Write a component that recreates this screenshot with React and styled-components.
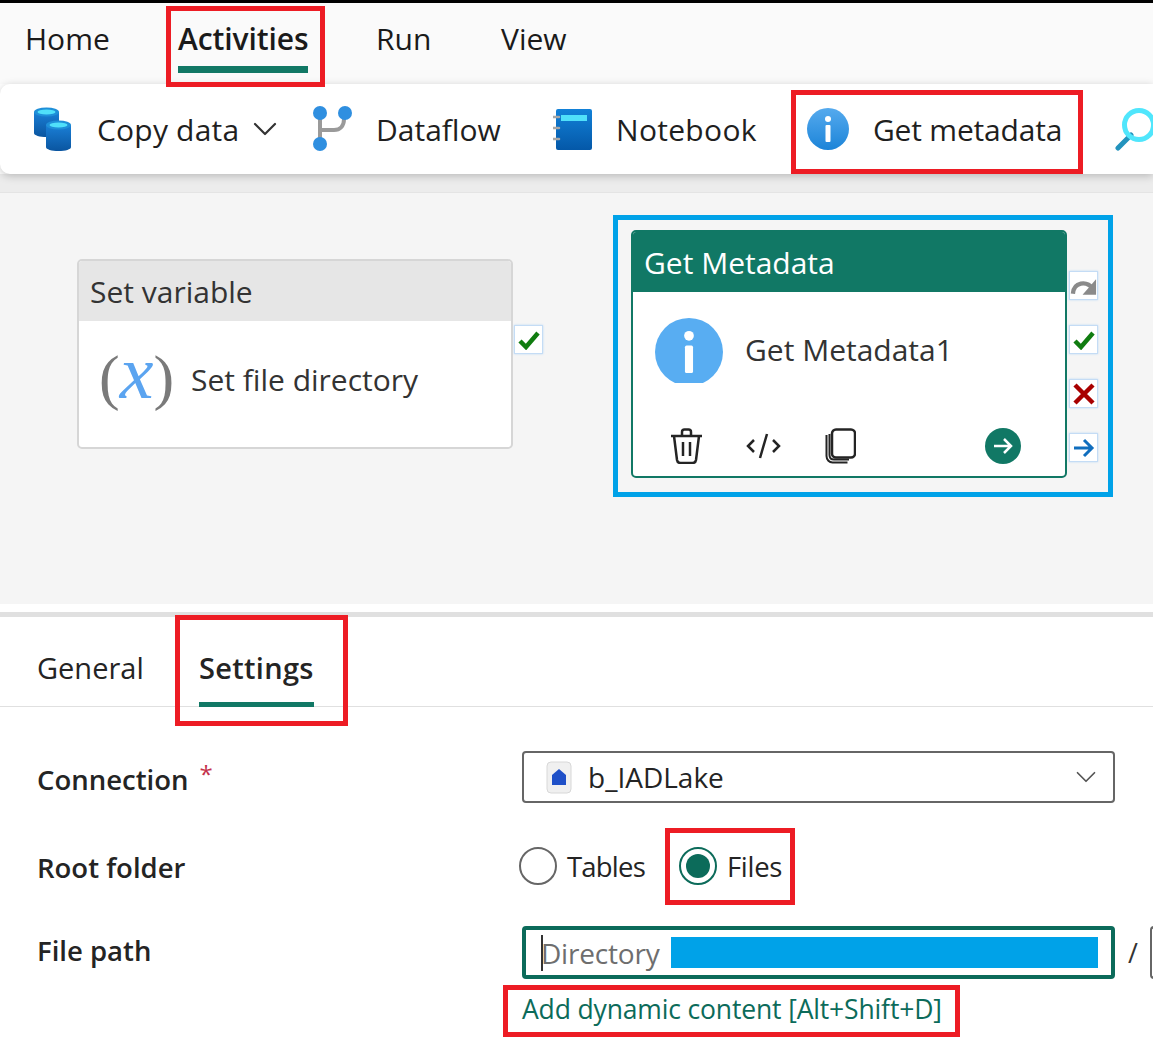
import styled, { createGlobalStyle } from "styled-components";
import { ChevronDown } from "lucide-react";

const Global = createGlobalStyle`
  html, body { margin: 0; padding: 0; background: #fff; }
  body { font-family: "Open Sans", "Noto Sans", sans-serif; color: #242424; }
`;

const Page = styled.div`
  width: 1153px;
  height: 1039px;
  overflow: hidden;
  border-top: 3px solid #000;
  box-sizing: border-box;
  background: #fff;
`;

// red annotation frames sit on top of the ui
const Marker = styled.div`
  position: absolute;
  top: ${(p) => p.$t}px;
  right: ${(p) => p.$r}px;
  bottom: ${(p) => p.$b}px;
  left: ${(p) => p.$l}px;
  border: 5px solid #ed1c24;
  pointer-events: none;
  z-index: 5;
`;

const MenuBar = styled.div`
  height: 81px;
  box-sizing: border-box;
  background: #fafafa;
  display: flex;
  align-items: center;
  padding: 0 0 10px 25px;
  font-size: 30px;
`;
const MenuItem = styled.div`
  position: relative;
  margin-right: ${(p) => p.$after}px;
  width: ${(p) => p.$w}px;
  white-space: nowrap;
  font-weight: ${(p) => (p.$active ? 600 : 400)};
  letter-spacing: ${(p) => (p.$active ? -0.1 : 0)}px;
  color: #1a1a1a;
`;
const MenuUnderline = styled.div`
  position: absolute;
  left: 0;
  right: 0;
  bottom: -14px;
  height: 7px;
  background: #117865;
`;

const Toolbar = styled.div`
  height: 90px;
  background: #fff;
  border-radius: 10px 0 0 10px;
  display: flex;
  align-items: center;
  padding-left: 32px;
  font-size: 30px;
  box-shadow: 0 2px 8px rgba(0, 0, 0, 0.22);
  position: relative;
  z-index: 2;
`;
const ToolItem = styled.div`
  position: relative;
  display: flex;
  align-items: center;
  margin-right: ${(p) => p.$after}px;
  color: #1f1f1f;
  white-space: nowrap;
  flex: none;
`;
const ToolLabel = styled.span`
  margin-left: ${(p) => p.$gap}px;
  width: ${(p) => p.$w}px;
  letter-spacing: ${(p) => p.$ls || 0}px;
`;
const ToolIcon = styled.svg`
  display: block;
  flex: none;
`;
const CopyChevron = styled(ChevronDown)`
  margin: 0 -9px 0 6px;
  flex: none;
`;

const ToolGap = styled.div`
  height: 18px;
  background: #ececec;
`;

const Canvas = styled.div`
  position: relative;
  height: 412px;
  background: #f5f5f5;
  border-top: 1px solid #e4e4e4;
  box-sizing: border-box;
`;
const Selection = styled.div`
  position: absolute;
  left: 613px;
  top: 22px;
  width: 500px;
  height: 282px;
  box-sizing: border-box;
  border: 5px solid #00a2e8;
`;
const Node = styled.div`
  position: absolute;
  left: ${(p) => p.$x}px;
  top: ${(p) => p.$y}px;
  width: 436px;
  height: ${(p) => p.$h}px;
  box-sizing: border-box;
  background: #fff;
  border: 2px solid ${(p) => (p.$selected ? "#117865" : "#d6d6d6")};
  border-radius: 5px;
  overflow: hidden;
  display: flex;
  flex-direction: column;
`;
const NodeHeader = styled.div`
  height: 60px;
  flex: none;
  box-sizing: border-box;
  padding-left: 11px;
  display: flex;
  align-items: center;
  font-size: 30px;
  background: ${(p) => (p.$selected ? "#117865" : "#e6e6e6")};
  color: ${(p) => (p.$selected ? "#fff" : "#333")};
`;
const NodeBody = styled.div`
  display: flex;
  align-items: center;
  padding: ${(p) => p.$pad};
  font-size: 30px;
  color: #333;
  white-space: nowrap;
`;
const Fx = styled.div`
  width: 68px;
  height: 80px;
  margin-right: 24px;
  display: flex;
  align-items: center;
  justify-content: space-between;
  font-family: "Liberation Serif", serif;
  line-height: 1;
`;
const Paren = styled.span`
  font-size: 62px;
  color: #7a7a7a;
  position: relative;
  top: -3px;
`;
const FxVar = styled.span`
  font-size: 76px;
  font-style: italic;
  color: #5ba4f0;
  position: relative;
  top: -8px;
`;
const IconClip = styled.div`
  height: 65px;
  overflow: hidden;
  flex: none;
`;
const NodeName = styled.span`
  margin-left: ${(p) => p.$gap}px;
  padding-bottom: 2px;
`;
const NodeActions = styled.div`
  margin-top: auto;
  height: 60px;
  flex: none;
  display: flex;
  align-items: center;
  padding-left: 37px;
`;
const ActionSlot = styled.div`
  display: flex;
  margin-right: ${(p) => p.$after}px;
`;
const PortColumn = styled.div`
  position: absolute;
  left: ${(p) => p.$x}px;
  top: ${(p) => p.$y}px;
  display: flex;
  flex-direction: column;
  gap: 25px;
`;
const Port = styled.div`
  width: 29px;
  height: 29px;
  box-sizing: border-box;
  background: #fff;
  border: 1px solid #c4dcf5;
  box-shadow: 0 0 2px #bcd8f5;
  display: flex;
  align-items: center;
  justify-content: center;
`;

const Panel = styled.div`
  height: 5px;
  margin-top: 8px;
  background: #e0e0e0;
`;
const PanelTabs = styled.div`
  position: relative;
  height: 90px;
  box-sizing: border-box;
  border-bottom: 1px solid #e0e0e0;
  display: flex;
  align-items: center;
  padding: 12px 0 0 37px;
  font-size: 29px;
  color: #242424;
`;
const PanelTab = styled.div`
  position: relative;
  width: ${(p) => p.$w}px;
  margin-right: ${(p) => p.$after}px;
  white-space: nowrap;
  font-weight: ${(p) => (p.$active ? 600 : 400)};
  letter-spacing: ${(p) => p.$ls || 0}px;
`;
const PanelUnderline = styled.div`
  position: absolute;
  left: 0;
  right: 0;
  bottom: -20px;
  height: 5px;
  background: #117865;
`;

const Form = styled.div`
  display: grid;
  grid-template-columns: 485px 593px 60px;
  padding: 44px 0 0 37px;
  align-items: center;
`;
const Label = styled.div`
  font-size: 27.5px;
  font-weight: 600;
  color: #242424;
  white-space: nowrap;
  box-sizing: border-box;
  height: ${(p) => p.$h}px;
  padding: ${(p) => p.$pt || 0}px 0 ${(p) => p.$pb || 0}px;
  display: flex;
  align-items: center;
`;
const Required = styled.span`
  color: #c4314b;
  font-size: 24px;
  font-weight: 400;
  margin-left: 11px;
  position: relative;
  top: -6px;
`;
const Select = styled.div`
  height: 52px;
  box-sizing: border-box;
  border: 2px solid #666;
  border-radius: 4px;
  display: flex;
  align-items: center;
  padding: 0 10px 0 22px;
  font-size: 28px;
  color: #242424;
`;
const SelectText = styled.span`
  margin-left: 16px;
  flex: 1;
`;
const Radios = styled.div`
  height: 123px;
  box-sizing: border-box;
  padding-top: 3px;
  display: flex;
  align-items: center;
  margin-left: -3px;
`;
const Radio = styled.div`
  position: relative;
  display: flex;
  align-items: center;
  gap: 10px;
  font-size: 27.5px;
  letter-spacing: ${(p) => p.$ls}px;
  margin-right: 34px;
  color: #242424;
`;
const RadioDot = styled.div`
  width: 38px;
  height: 38px;
  box-sizing: border-box;
  border-radius: 50%;
  border: 2px solid ${(p) => (p.$on ? "#0c6b5a" : "#666")};
  display: flex;
  align-items: center;
  justify-content: center;
  &::after {
    content: "";
    display: ${(p) => (p.$on ? "block" : "none")};
    width: 24px;
    height: 24px;
    border-radius: 50%;
    background: #0c6b5a;
  }
`;
const PathInput = styled.div`
  height: 53px;
  box-sizing: border-box;
  border: 4px solid #0c6b5a;
  border-radius: 4px;
  display: flex;
  align-items: center;
  padding-left: 15px;
  font-size: 28px;
  letter-spacing: -0.2px;
  color: #6e6e6e;
`;
const Caret = styled.div`
  width: 2px;
  height: 36px;
  background: #333;
  margin-right: -2px;
  flex: none;
`;
const Redaction = styled.div`
  width: 427px;
  height: 31px;
  margin-left: auto;
  margin-right: 13px;
  background: #00a2e8;
`;
const Slash = styled.div`
  font-size: 27px;
  color: #333;
  display: flex;
  align-items: center;
  gap: 12px;
  padding-left: 13px;
`;
const NextInput = styled.div`
  width: 20px;
  height: 53px;
  flex: none;
  box-sizing: border-box;
  border: 2px solid #666;
  border-right: none;
  border-radius: 4px 0 0 4px;
`;
const LinkRow = styled.div`
  grid-column: 2;
  position: relative;
  font-size: 26.5px;
  letter-spacing: -0.15px;
  color: #0c6b5a;
  white-space: nowrap;
  height: 52px;
  box-sizing: border-box;
  padding-bottom: 4px;
  display: flex;
  align-items: center;
  margin-top: 6px;
`;

function CopyDataIcon() {
  return (
    <ToolIcon width="40" height="44" viewBox="0 0 40 44">
      <defs>
        <linearGradient id="cyl" x1="0" y1="0" x2="0" y2="1">
          <stop offset="0" stopColor="#1a7fd6" />
          <stop offset="1" stopColor="#0a55a0" />
        </linearGradient>
      </defs>
      <path d="M2 5v21c0 2.500 5.500 4 12.500 4S27 28.500 27 26V5z" fill="url(#cyl)" />
      <ellipse cx="14.500" cy="5" rx="12.500" ry="4.500" fill="#1f8fd8" />
      <ellipse cx="14.500" cy="5" rx="9" ry="2.600" fill="#50e0fa" />
      <path d="M14 18v22c0 2.500 5.500 4 12.500 4S39 42.500 39 40V18z" fill="url(#cyl)" />
      <ellipse cx="26.500" cy="18" rx="12.500" ry="4.500" fill="#1f8fd8" />
      <ellipse cx="26.500" cy="18" rx="9" ry="2.600" fill="#50e0fa" />
    </ToolIcon>
  );
}

function DataflowIcon() {
  return (
    <ToolIcon width="40" height="46" viewBox="0 0 40 46">
      <path d="M8 10v28M8 24h14c6 0 10-4 10-11" fill="none" stroke="#9a9a9a" strokeWidth="4" />
      <circle cx="8" cy="7" r="7" fill="#2f8fe0" />
      <circle cx="33" cy="7" r="7" fill="#2f8fe0" />
      <circle cx="8" cy="38" r="7" fill="#2f8fe0" />
    </ToolIcon>
  );
}

function NotebookIcon() {
  return (
    <ToolIcon width="39" height="41" viewBox="0 0 39 41">
      <defs>
        <linearGradient id="nb" x1="0" y1="0" x2="0" y2="1">
          <stop offset="0" stopColor="#1281d8" />
          <stop offset="1" stopColor="#0458a8" />
        </linearGradient>
      </defs>
      <rect x="3" y="0" width="36" height="41" rx="2" fill="url(#nb)" />
      <rect x="8" y="6" width="26" height="6" fill="#50e0fa" />
      <path d="M0 8h6M0 19h6M0 30h6" stroke="#a8a8a8" strokeWidth="2.500" strokeLinecap="round" />
    </ToolIcon>
  );
}

function InfoIcon({ size, flat }) {
  return (
    <ToolIcon width={size} height={size} viewBox="0 0 42 42">
      <defs>
        <linearGradient id="info" x1="0" y1="0" x2="0" y2="1">
          <stop offset="0" stopColor="#55aaee" />
          <stop offset="1" stopColor="#1c84d8" />
        </linearGradient>
      </defs>
      <circle cx="21" cy="21" r="21" fill={flat ? "#58adf2" : "url(#info)"} />
      <circle cx="21" cy="11" r="3" fill="#fff" />
      <rect x="18.500" y="17" width="5" height="17" rx="1" fill="#fff" />
    </ToolIcon>
  );
}

function SearchIcon() {
  return (
    <ToolIcon width="44" height="46" viewBox="0 0 44 46">
      <path d="M3 42l13-13" stroke="#2393bd" strokeWidth="5" strokeLinecap="round" />
      <circle cx="24" cy="19" r="14.500" fill="none" stroke="#50e6fc" strokeWidth="5" />
    </ToolIcon>
  );
}

function Check() {
  return (
    <svg width="22" height="20" viewBox="0 0 22 20">
      <path d="M2 11l6 6L20 3" fill="none" stroke="#107c10" strokeWidth="4.500" />
    </svg>
  );
}
function Cross() {
  return (
    <svg width="22" height="22" viewBox="0 0 22 22">
      <path d="M2 2l18 18M20 2L2 20" fill="none" stroke="#a80000" strokeWidth="4.500" />
    </svg>
  );
}
function Skip() {
  return (
    <svg width="28" height="22" viewBox="0 0 28 22">
      <path d="M3 19c1-12 14-14 21-5" fill="none" stroke="#8a8a8a" strokeWidth="4.500" />
      <path d="M27 4v16H13z" fill="#8a8a8a" />
    </svg>
  );
}
function ArrowPort() {
  return (
    <svg width="22" height="22" viewBox="0 0 22 22">
      <path d="M1 11h18M11 3l8 8-8 8" fill="none" stroke="#106ebe" strokeWidth="3" />
    </svg>
  );
}
function Trash() {
  return (
    <svg width="33" height="36" viewBox="0 0 33 36" fill="none" stroke="#242424" strokeWidth="2.500">
      <path d="M1 8h31M4 8l3 24c.3 2 1.500 3 3.500 3h12c2 0 3.200-1 3.500-3l3-24M12 8V4c0-1.500 1-2.500 2.500-2.500h4C20 1.500 21 2.500 21 4v4M13 14v14M20 14v14" />
    </svg>
  );
}
function CodeIcon() {
  return (
    <svg width="35" height="28" viewBox="0 0 35 28" fill="none" stroke="#242424" strokeWidth="2.500">
      <path d="M8 8l-6 6 6 6M27 8l6 6-6 6M21 2l-7 24" />
    </svg>
  );
}
function CopyIcon() {
  return (
    <svg width="31" height="36" viewBox="0 0 31 36" fill="none" stroke="#242424" strokeWidth="2">
      <rect x="7" y="1.500" width="23" height="28" rx="4" strokeWidth="2.500" />
      <path d="M1.500 7v21c0 4 3 6.500 6 6.500h15" />
      <path d="M4.500 6v21c0 3 2 4.500 4.500 4.500h15" />
    </svg>
  );
}
function GoIcon() {
  return (
    <svg width="36" height="36" viewBox="0 0 36 36">
      <circle cx="18" cy="18" r="18" fill="#117865" />
      <path d="M9 18h17M19 11l7 7-7 7" fill="none" stroke="#fff" strokeWidth="2.500" />
    </svg>
  );
}
function LakeIcon() {
  return (
    <svg width="26" height="33" viewBox="0 0 26 33">
      <rect x="1" y="1" width="24" height="31" rx="4" fill="#f0f0f0" stroke="#d8d8d8" />
      <path d="M6 24V14l7-6 7 6v10z" fill="#1f50c8" />
    </svg>
  );
}

export default function App() {
  return (
    <>
      <Global />
      <Page>
        <MenuBar>
          <MenuItem $w={84} $after={69}>Home</MenuItem>
          <MenuItem $w={130} $after={68} $active>
            Activities
            <MenuUnderline />
            <Marker $t={-12} $r={-17} $b={-28} $l={-12} />
          </MenuItem>
          <MenuItem $w={54} $after={71}>Run</MenuItem>
          <MenuItem $w={66} $after={0}>View</MenuItem>
        </MenuBar>
        <Toolbar>
          <ToolItem $after={36}>
            <CopyDataIcon />
            <ToolLabel $gap={25} $w={142} $ls={0.2}>Copy data</ToolLabel>
            <CopyChevron size={40} color="#333" strokeWidth={1.3} />
          </ToolItem>
          <ToolItem $after={53}>
            <DataflowIcon />
            <ToolLabel $gap={24} $w={124}>Dataflow</ToolLabel>
          </ToolItem>
          <ToolItem $after={50}>
            <NotebookIcon />
            <ToolLabel $gap={24} $w={141} $ls={0.3}>Notebook</ToolLabel>
          </ToolItem>
          <ToolItem $after={54}>
            <InfoIcon size={42} />
            <ToolLabel $gap={24} $w={188} $ls={-0.2}>Get metadata</ToolLabel>
            <Marker $t={-18} $r={-22} $b={-24} $l={-16} />
          </ToolItem>
          <SearchIcon />
        </Toolbar>
        <ToolGap />
        <Canvas>
          <Node $x={77} $y={66} $h={190}>
            <NodeHeader>Set variable</NodeHeader>
            <NodeBody $pad="19px 0 0 20px">
              <Fx>
                <Paren>(</Paren>
                <FxVar>x</FxVar>
                <Paren>)</Paren>
              </Fx>
              <NodeName $gap={0}>Set file directory</NodeName>
            </NodeBody>
          </Node>
          <PortColumn $x={514} $y={132}>
            <Port><Check /></Port>
          </PortColumn>
          <Selection>
            <Node $x={13} $y={10} $h={248} $selected>
              <NodeHeader $selected>Get Metadata</NodeHeader>
              <NodeBody $pad="26px 0 0 22px">
                <IconClip><InfoIcon size={68} flat /></IconClip>
                <NodeName $gap={22}>Get Metadata1</NodeName>
              </NodeBody>
              <NodeActions>
                <ActionSlot $after={43}><Trash /></ActionSlot>
                <ActionSlot $after={44}><CodeIcon /></ActionSlot>
                <ActionSlot $after={129}><CopyIcon /></ActionSlot>
                <GoIcon />
              </NodeActions>
            </Node>
            <PortColumn $x={451} $y={51}>
              <Port><Skip /></Port>
              <Port><Check /></Port>
              <Port><Cross /></Port>
              <Port><ArrowPort /></Port>
            </PortColumn>
          </Selection>
        </Canvas>
        <Panel />
        <PanelTabs>
          <PanelTab $w={107} $after={55}>General</PanelTab>
          <PanelTab $w={115} $after={0} $active $ls={0.3}>
            Settings
            <PanelUnderline />
            <Marker $t={-33} $r={-34} $b={-39} $l={-24} />
          </PanelTab>
        </PanelTabs>
        <Form>
          <Label $h={52} $pt={5}>Connection<Required>*</Required></Label>
          <Select>
            <LakeIcon />
            <SelectText>b_IADLake</SelectText>
            <ChevronDown size={34} color="#555" strokeWidth={1.2} />
          </Select>
          <div />
          <Label $h={123} $pt={6}>Root folder</Label>
          <Radios>
            <Radio $ls={-0.8}>
              <RadioDot />
              Tables
            </Radio>
            <Radio $ls={-0.3}>
              <RadioDot $on />
              Files
              <Marker $t={-19} $r={-13} $b={-20} $l={-14} />
            </Radio>
          </Radios>
          <div />
          <Label $h={53} $pb={4}>File path</Label>
          <PathInput>
            <Caret />
            Directory
            <Redaction />
          </PathInput>
          <Slash>/<NextInput /></Slash>
          <LinkRow>
            Add dynamic content [Alt+Shift+D]
            <Marker $t={0} $r={155} $b={0} $l={-19} />
          </LinkRow>
        </Form>
      </Page>
    </>
  );
}
